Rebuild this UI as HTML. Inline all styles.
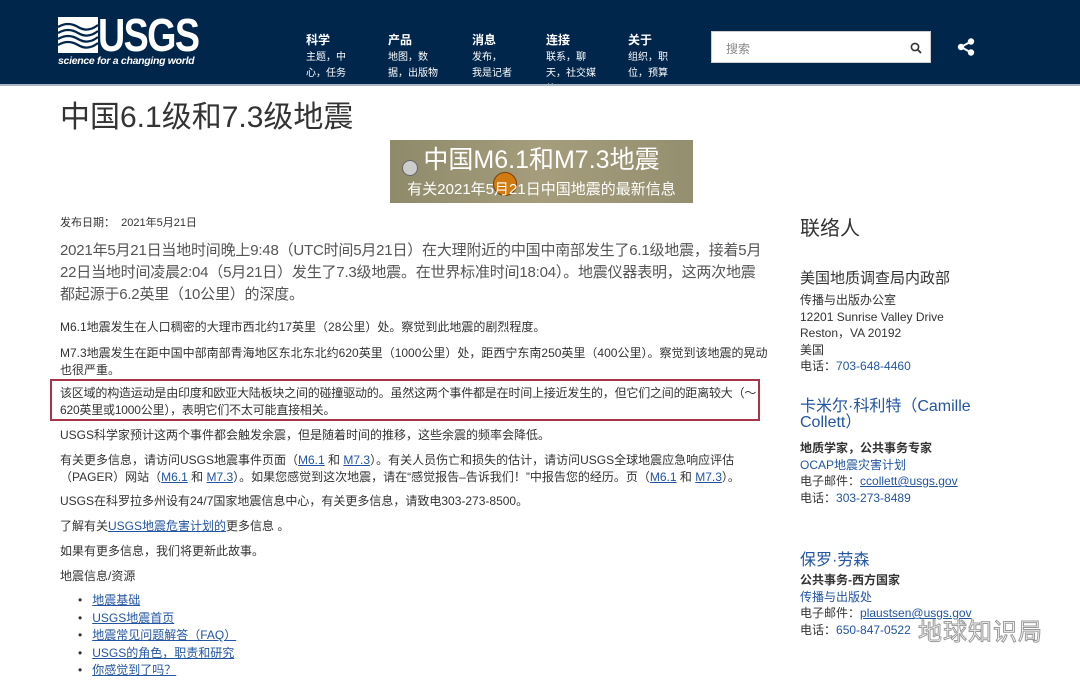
<!DOCTYPE html>
<html><head><meta charset="utf-8"><style>
body{margin:0;width:1080px;height:677px;overflow:hidden;background:#fff;font-family:"Liberation Sans","Noto Sans CJK SC",sans-serif;color:#333;position:relative}
.a{position:absolute}
.hdr{left:0;top:0;width:1080px;height:84px;background:#00264c;border-bottom:2px solid #a9b6c4}
.nav{color:#fff;font-size:10px;line-height:16px}
.nav b{font-size:12px;display:block;margin-bottom:2px}
p{margin:0}
.b{font-size:12px;line-height:17px;color:#333}
a,.l{color:#2255a4}
u{color:#2255a4}
.r{font-size:12px;line-height:16.5px;color:#333}
</style></head><body>
<div class="a hdr"></div>
<svg class="a" style="left:58px;top:17px" width="40" height="36" viewBox="0 0 40 36"><rect width="40" height="36" fill="#fff"/><path d="M0 10 Q10 4 20 10 T40 8 M0 16 Q10 10 20 16 T40 14 M0 22 Q10 16 20 22 T40 20 M0 28 Q10 22 20 28 T40 26" stroke="#00264c" stroke-width="2.2" fill="none"/></svg>
<div class="a" style="left:98px;top:8px;color:#fff;font-size:46px;font-weight:bold;letter-spacing:-2px;transform:scaleX(.82);transform-origin:left;font-family:'Liberation Sans Narrow','Liberation Sans',sans-serif">USGS</div>
<div class="a" style="left:58px;top:55px;color:#fff;font-size:10.5px;font-weight:bold;font-style:italic;letter-spacing:-.3px">science for a changing world</div>
<div class="a nav" style="left:306px;top:32px;width:50px"><b>科学</b>主题，中心，任务</div>
<div class="a nav" style="left:388px;top:32px;width:56px"><b>产品</b>地图，数据，出版物</div>
<div class="a nav" style="left:472px;top:32px;width:50px"><b>消息</b>发布，<br>我是记者</div>
<div class="a nav" style="left:546px;top:32px;width:56px;height:52px;overflow:hidden"><b>连接</b>联系，聊天，社交媒体</div>
<div class="a nav" style="left:628px;top:32px;width:50px"><b>关于</b>组织，职位，预算</div>
<div class="a" style="left:711px;top:31px;width:220px;height:32px;background:#fff;border:1px solid #ccc;box-sizing:border-box"><span class="a" style="left:14px;top:8px;font-size:12px;color:#888">搜索</span>
<svg class="a" style="left:198px;top:10px" width="12" height="12"><circle cx="5" cy="5" r="3.6" stroke="#333" stroke-width="1.6" fill="none"/><path d="M8 8l3 3" stroke="#333" stroke-width="1.8"/></svg></div>
<svg class="a" style="left:957px;top:38px" width="18" height="18"><circle cx="4" cy="9" r="3.2" fill="#fff"/><circle cx="14" cy="3.5" r="3.2" fill="#fff"/><circle cx="14" cy="14.5" r="3.2" fill="#fff"/><path d="M4 9L14 3.5M4 9l10 5.5" stroke="#fff" stroke-width="2"/></svg>

<div class="a" style="left:60px;top:92px;font-size:30px;color:#333">中国6.1级和7.3级地震</div>
<div class="a" style="left:390px;top:140px;width:303px;height:63px;background:linear-gradient(90deg,#8e8a6a,#a59d7c 50%,#948f70);overflow:hidden">
<div class="a" style="left:12px;top:20px;width:14px;height:14px;border-radius:50%;background:#ccc;border:1px solid #666"></div>
<div class="a" style="left:103px;top:32px;width:22px;height:22px;border-radius:50%;background:#d07a10;border:1px solid #7a4000"></div>
<div class="a" style="left:0;width:303px;top:0;text-align:center;color:#fff;font-size:25px">中国M6.1和M7.3地震</div>
<div class="a" style="left:0;width:303px;top:38px;text-align:center;color:#fff;font-size:15px">有关2021年5月21日中国地震的最新信息</div></div>

<div class="a" style="left:60px;top:214px;font-size:11px">发布日期：&nbsp; 2021年5月21日</div>
<div class="a" style="left:60px;top:240px;width:704px;font-size:15px;line-height:22px;letter-spacing:-0.2px;color:#555">2021年5月21日当地时间晚上9:48（UTC时间5月21日）在大理附近的中国中南部发生了6.1级地震，接着5月<br>22日当地时间凌晨2:04（5月21日）发生了7.3级地震。在世界标准时间18:04）。地震仪器表明，这两次地震都起源于6.2英里（10公里）的深度。</div>
<p class="a b" style="left:60px;top:319px">M6.1地震发生在人口稠密的大理市西北约17英里（28公里）处。察觉到此地震的剧烈程度。</p>
<p class="a b" style="left:60px;top:345px;width:712px">M7.3地震发生在距中国中部南部青海地区东北东北约620英里（1000公里）处，距西宁东南250英里（400公里）。察觉到该地震的晃动也很严重。</p>
<div class="a" style="left:50px;top:379px;width:710px;height:42px;border:2px solid #a8344a;box-sizing:border-box"></div>
<p class="a b" style="left:60px;top:385px;width:700px;height:34px;overflow:hidden;letter-spacing:-0.2px">该区域的构造运动是由印度和欧亚大陆板块之间的碰撞驱动的。虽然这两个事件都是在时间上接近发生的，但它们之间的距离较大（〜620英里或1000公里），表明它们不太可能直接相关。</p>
<p class="a b" style="left:60px;top:427px">USGS科学家预计这两个事件都会触发余震，但是随着时间的推移，这些余震的频率会降低。</p>
<p class="a b" style="left:60px;top:452px;width:712px">有关更多信息，请访问USGS地震事件页面（<u>M6.1</u> 和 <u>M7.3</u>）。有关人员伤亡和损失的估计，请访问USGS全球地震应急响应评估（PAGER）网站（<u>M6.1</u> 和 <u>M7.3</u>）。如果您感觉到这次地震，请在“感觉报告–告诉我们！”中报告您的经历。页（<u>M6.1</u> 和 <u>M7.3</u>）。</p>
<p class="a b" style="left:60px;top:493px">USGS在科罗拉多州设有24/7国家地震信息中心，有关更多信息，请致电303-273-8500。</p>
<p class="a b" style="left:60px;top:518px">了解有关<u>USGS地震危害计划的</u>更多信息 。</p>
<p class="a b" style="left:60px;top:543px">如果有更多信息，我们将更新此故事。</p>
<p class="a b" style="left:60px;top:568px">地震信息/资源</p>
<div class="a b" style="left:78px;top:592px;line-height:17.5px">
<div>•&nbsp;&nbsp; <u>地震基础</u></div><div>•&nbsp;&nbsp; <u>USGS地震首页</u></div><div>•&nbsp;&nbsp; <u>地震常见问题解答（FAQ）</u></div><div>•&nbsp;&nbsp; <u>USGS的角色，职责和研究</u></div><div>•&nbsp;&nbsp; <u>你感觉到了吗？</u></div></div>

<div class="a" style="left:800px;top:212px;font-size:20px;color:#333">联络人</div>
<div class="a" style="left:800px;top:267px;font-size:15px;color:#333">美国地质调查局内政部</div>
<div class="a r" style="left:800px;top:292px">传播与出版办公室<br>12201 Sunrise Valley Drive<br>Reston，VA 20192<br>美国<br>电话：<span class="l">703-648-4460</span></div>
<div class="a l" style="left:800px;top:399px;font-size:16px;line-height:16px;width:180px">卡米尔·科利特（Camille Collett）</div>
<div class="a r" style="left:800px;top:440px"><b>地质学家，公共事务专家</b><br><span class="l">OCAP地震灾害计划</span><br>电子邮件：<u>ccollett@usgs.gov</u><br>电话：<span class="l">303-273-8489</span></div>
<div class="a l" style="left:800px;top:546px;font-size:16px">保罗·劳森</div>
<div class="a r" style="left:800px;top:572px"><b>公共事务-西方国家</b><br><span class="l">传播与出版处</span><br>电子邮件：<u>plaustsen@usgs.gov</u><br>电话：<span class="l">650-847-0522</span></div>
<div class="a" style="left:918px;top:612px;font-size:24px;color:#fff;-webkit-text-stroke:1px #999;letter-spacing:1px">地球知识局</div>
</body></html>
